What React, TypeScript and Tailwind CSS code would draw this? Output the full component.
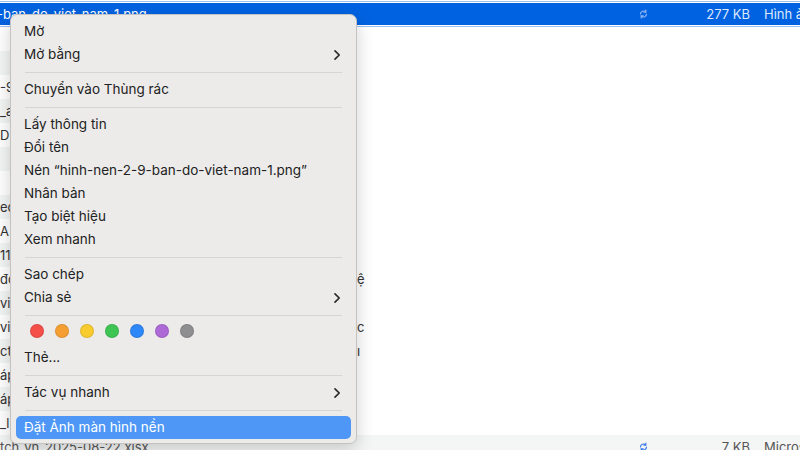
import React from "react";

const font = { fontFamily: "Inter, 'Noto Sans', 'Liberation Sans', sans-serif" };

function Sync({ color }: { color: string }) {
  return (
    <svg className="shrink-0" width="9" height="10" viewBox="0 0 9 10" fill="none" stroke={color} strokeWidth="1.2" strokeLinecap="round">
      <path d="M1.5 5a3 3 0 0 1 5-2.2" />
      <path d="M7.5 5a3 3 0 0 1-5 2.2" />
      <path d="M6.8 1v2.1H4.8" />
      <path d="M2.2 9V6.9h2" />
    </svg>
  );
}

function Chevron() {
  return (
    <svg width="8" height="12" viewBox="0 0 8 12" fill="none" stroke="#2b2b2b" strokeWidth="1.7" strokeLinecap="round" strokeLinejoin="round">
      <path d="M2 1.8L6.2 6L2 10.2" />
    </svg>
  );
}

const rows: { left: string; peek?: string }[] = [
  { left: "" },
  { left: "" },
  { left: "-9" },
  { left: "_a" },
  { left: "DE" },
  { left: "" },
  { left: "" },
  { left: "ec" },
  { left: "A I" },
  { left: "11" },
  { left: "đo", peek: "ệ" },
  { left: "vil" },
  { left: "vil", peek: "c" },
  { left: "ct", peek: "ı" },
  { left: "áp" },
  { left: "áp" },
  { left: "_l" },
];

function Item({ label, chevron, active }: { label: string; chevron?: boolean; active?: boolean }) {
  return (
    <div
      className={`h-[23px] flex items-center justify-between pl-[8px] pr-[10px] rounded-[5px] text-[13.5px] leading-none ${
        active ? "bg-[#4e97f6] text-white" : "text-[#222]"
      }`}
    >
      <span className="whitespace-nowrap">{label}</span>
      {chevron && <Chevron />}
    </div>
  );
}

function Sep() {
  return (
    <div className="h-[12px] flex items-center px-[9px]">
      <div className="h-[1px] w-full bg-[#d6d5d4]" />
    </div>
  );
}

const dots = ["#f54f4a", "#f59f33", "#f8cb2e", "#3fc553", "#2f88f7", "#ad69d6", "#8e8e91"];

export default function App() {
  return (
    <div className="relative w-[800px] h-[450px] overflow-hidden bg-white" style={font}>
      {/* background finder list */}
      <div className="h-[1px] bg-white" />
      <div className="h-[1px] bg-[#9cc0f2]" />
      <div className="h-[1px] bg-white" />
      <div className="h-[22px] bg-[#0062e1] flex items-center text-[13px] leading-none overflow-hidden">
        <span className="shrink-0 ml-[-3px] w-[642px] text-white whitespace-nowrap">-ban-do-viet-nam-1.png</span>
        <Sync color="#8db6f3" />
        <span className="shrink-0 ml-[52px] w-[50px] text-right text-[#dce8fc]">277 KB</span>
        <span className="shrink-0 ml-[14px] text-[#dce8fc] whitespace-nowrap">Hình ảnh PNG</span>
      </div>
      <div className="h-[1px] bg-white" />
      <div className="h-[1px] bg-[#9cc0f2]" />
      {rows.map((r, i) => (
        <div key={i} className="h-[24px] flex items-center text-[13px] leading-none text-[#333]">
          <div className={`shrink-0 w-[357px] h-full flex items-center ${i % 2 === 1 ? "bg-[#f4f5f5]" : "bg-white"}`}>
            <span className="whitespace-nowrap">{r.left}</span>
          </div>
          <span className="text-[#333]">{r.peek ?? ""}</span>
        </div>
      ))}
      <div className="h-[24px] bg-[#f4f5f5] flex items-center text-[13px] leading-none text-[#555] overflow-hidden">
        <span className="shrink-0 w-[639px] whitespace-nowrap">tch_vn_2025-08-22.xlsx</span>
        <Sync color="#3a7ce8" />
        <span className="shrink-0 ml-[52px] w-[50px] text-right">7 KB</span>
        <span className="shrink-0 ml-[14px] whitespace-nowrap">Microsoft Excel</span>
      </div>

      {/* context menu */}
      <div className="absolute left-[10px] top-[14px] w-[347px] rounded-[7px] border border-[#c4c3c2] bg-[#ecebea] px-[5px] pt-[5px] pb-[4px] shadow-[0_6px_18px_rgba(0,0,0,0.18)]">
        <Item label="Mờ" />
        <Item label="Mở bằng" chevron />
        <Sep />
        <Item label="Chuyển vào Thùng rác" />
        <Sep />
        <Item label="Lấy thông tin" />
        <Item label="Đổi tên" />
        <Item label="Nén “hinh-nen-2-9-ban-do-viet-nam-1.png”" />
        <Item label="Nhân bản" />
        <Item label="Tạo biệt hiệu" />
        <Item label="Xem nhanh" />
        <Sep />
        <Item label="Sao chép" />
        <Item label="Chia sẻ" chevron />
        <Sep />
        <div className="h-[25px] flex items-start pt-[3px] pl-[14px] gap-[11px]">
          {dots.map((c) => (
            <div
              key={c}
              className="w-[14px] h-[14px] rounded-full border border-black/10"
              style={{ backgroundColor: c }}
            />
          ))}
        </div>
        <Item label="Thẻ..." />
        <Sep />
        <Item label="Tác vụ nhanh" chevron />
        <Sep />
        <Item label="Đặt Ảnh màn hình nền" active />
      </div>
    </div>
  );
}
